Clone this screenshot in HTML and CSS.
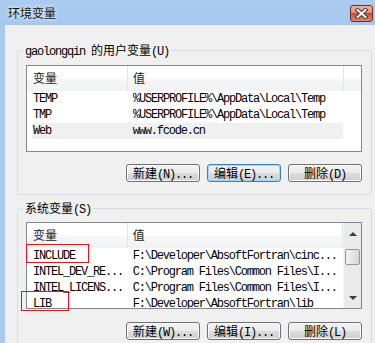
FILE: index.html
```html
<!DOCTYPE html>
<html lang="zh-CN">
<head>
    <meta charset="UTF-8">
    <meta name="viewport" content="width=device-width, initial-scale=1.0">
    <title>环境变量</title>
    <link rel="stylesheet" href="styles.css">
</head>
<body>

    <div class="window">
        <div class="titlebar">
            <span class="title">环境变量</span>
            <span class="close-btn">
                <svg width="13" height="11" viewBox="0 0 13 11">
                    <path d="M2.5 2 L10.5 9 M10.5 2 L2.5 9" stroke="#3a3a3a" stroke-width="4" stroke-linecap="square"/>
                    <path d="M2.5 2 L10.5 9 M10.5 2 L2.5 9" stroke="#fff" stroke-width="2" stroke-linecap="square"/>
                </svg>
            </span>
        </div>

        <div class="client">
            <div class="group">
                <div class="group-title">gaolongqin <span class="cn">的用户变量</span>(U)</div>
                <div class="listview">
                    <div class="lv-main">
                        <div class="lv-head">
                            <div class="col c1 cn">变量</div>
                            <div class="col c2 cn">值</div>
                            <div class="col filler"></div>
                        </div>
                        <div class="lv-row">
                            <div class="col c1">TEMP</div>
                            <div class="col c2">%USERPROFILE%\AppData\Local\Temp</div>
                        </div>
                        <div class="lv-row">
                            <div class="col c1">TMP</div>
                            <div class="col c2">%USERPROFILE%\AppData\Local\Temp</div>
                        </div>
                        <div class="lv-row hover">
                            <div class="col c1">Web</div>
                            <div class="col c2">www.fcode.cn</div>
                        </div>
                    </div>
                </div>
                <div class="buttons">
                    <button class="btn"><span class="cn">新建</span>(N)...</button>
                    <button class="btn focused"><span class="cn">编辑</span>(E)...</button>
                    <button class="btn"><span class="cn">删除</span>(D)</button>
                </div>
            </div>

            <div class="group second">
                <div class="group-title"><span class="cn">系统变量</span>(S)</div>
                <div class="listview">
                    <div class="lv-main">
                        <div class="lv-head">
                            <div class="col c1 cn">变量</div>
                            <div class="col c2 cn">值</div>
                        </div>
                        <div class="lv-row">
                            <div class="col c1">INCLUDE</div>
                            <div class="col c2">F:\Developer\AbsoftFortran\cinc...</div>
                        </div>
                        <div class="lv-row">
                            <div class="col c1">INTEL_DEV_RE...</div>
                            <div class="col c2">C:\Program Files\Common Files\I...</div>
                        </div>
                        <div class="lv-row">
                            <div class="col c1">INTEL_LICENS...</div>
                            <div class="col c2">C:\Program Files\Common Files\I...</div>
                        </div>
                        <div class="lv-row">
                            <div class="col c1">LIB</div>
                            <div class="col c2">F:\Developer\AbsoftFortran\lib</div>
                        </div>
                    </div>
                    <div class="vscroll">
                        <span class="arrow up"></span>
                        <span class="thumb"></span>
                        <span class="track"></span>
                        <span class="arrow down"></span>
                    </div>
                </div>
                <div class="buttons">
                    <button class="btn"><span class="cn">新建</span>(W)...</button>
                    <button class="btn"><span class="cn">编辑</span>(I)...</button>
                    <button class="btn"><span class="cn">删除</span>(L)</button>
                </div>
            </div>
        </div>

        <!-- red marks drawn over the screenshot -->
        <div class="mark mark-include"></div>
        <div class="mark mark-lib"></div>
    </div>

</body>
</html>
```

FILE: styles.css
```css
body {
    margin: 0;
    background-color: #a9c9ef;
    font-family: 'Liberation Mono', 'Noto Sans CJK SC', monospace;
    font-size: 12px;
    color: #000;
    overflow: hidden;
}

.cn {
    font-family: 'Noto Sans CJK SC', sans-serif;
    letter-spacing: 0;
}

.window {
    position: relative;
    width: 375px;
    height: 343px;
}

.titlebar {
    height: 25px;
    display: flex;
    justify-content: space-between;
    align-items: flex-start;
    background: linear-gradient(#abcbf1, #a7c7ee);
}

.title {
    font-family: 'Noto Sans CJK SC', sans-serif;
    font-size: 12px;
    line-height: 14px;
    margin: 6px 0 0 8px;
    color: #111;
    text-shadow: 0 0 5px #e6f0fb, 0 0 3px #e6f0fb;
}

.close-btn {
    width: 21px;
    height: 15px;
    margin: 5px 2px 0 0;
    border: 1px solid #7b2a1e;
    border-radius: 3px;
    background: linear-gradient(#eeb0a2 0%, #e38f7b 45%, #c8412a 50%, #d45b41 60%, #e48468 100%);
    display: flex;
    align-items: center;
    justify-content: center;
}

.client {
    margin-left: 5px;
    height: 318px;
    padding-top: 25px;
    box-sizing: border-box;
    background-color: #f0f0f0;
}

.group {
    width: 355px;
    margin-left: 12px;
    box-sizing: border-box;
    border: 1px solid #d5dfe5;
    border-radius: 3px;
    padding: 0 9px 12px 8px;
}

.group.second {
    margin-top: 13px;
    height: 200px;
}

.group-title {
    width: fit-content;
    margin: -8px 0 6px -3px;
    padding: 0 2px;
    line-height: 14px;
    letter-spacing: -1.2px;
    background-color: #f0f0f0;
}

.group.second .group-title {
    margin-bottom: 5px;
}

.listview {
    height: 87px;
    box-sizing: border-box;
    border: 1px solid #828790;
    background-color: #fff;
    display: flex;
    overflow: hidden;
}

.lv-main {
    flex: 1;
    overflow: hidden;
}

.lv-head {
    display: flex;
    height: 25px;
    background: linear-gradient(#ffffff 0%, #ffffff 45%, #f6f7f8 55%, #f1f2f4 100%);
}

.lv-head .col {
    line-height: 24px;
    color: #1a1a1a;
    border-right: 1px solid #e3e5e8;
}

.lv-head .filler {
    flex: 1;
    border-right: none;
}

.col {
    box-sizing: border-box;
    white-space: nowrap;
    overflow: hidden;
}

.c1 {
    width: 101px;
    padding-left: 6px;
}

.c2 {
    width: 216px;
    padding-left: 5px;
}

.lv-row {
    display: flex;
    height: 16px;
    line-height: 16px;
    letter-spacing: -1.2px;
}

.lv-row.hover {
    margin-left: 5px;
    width: 311px;
    background-color: #f0f0f0;
}

.lv-row.hover .c1 {
    width: 96px;
    padding-left: 1px;
}

.vscroll {
    width: 17px;
    display: flex;
    flex-direction: column;
    align-items: center;
    background-color: #eaeaea;
    border-left: 1px solid #f4f4f4;
}

.arrow {
    width: 0;
    height: 0;
    border-left: 4px solid transparent;
    border-right: 4px solid transparent;
}

.arrow.up {
    margin-top: 9px;
    border-bottom: 4px solid #3a3a3a;
}

.arrow.down {
    margin-bottom: 8px;
    border-top: 4px solid #3a3a3a;
}

.thumb {
    width: 15px;
    height: 16px;
    margin-top: 13px;
    box-sizing: border-box;
    border: 1px solid #979797;
    border-radius: 2px;
    background: linear-gradient(90deg, #f3f3f3, #e2e2e2 60%, #d6d6d6);
}

.track {
    flex: 1;
}

.buttons {
    display: flex;
    justify-content: flex-end;
    gap: 7px;
    margin-top: 12px;
}

.group.second .buttons {
    margin-top: 13px;
}

.btn {
    width: 74px;
    height: 18px;
    padding: 0;
    font-family: 'Liberation Mono', monospace;
    font-size: 12px;
    line-height: 16px;
    letter-spacing: -1.2px;
    color: #000;
    border: 1px solid #707070;
    border-radius: 3px;
    background: linear-gradient(#f2f2f2 0%, #ebebeb 50%, #dddddd 51%, #cfcfcf 100%);
    box-shadow: inset 0 0 0 1px #fcfcfc;
}

.btn.focused {
    border-color: #3c7fb1;
    box-shadow: inset 0 0 0 1px #9fdbf9;
}

.mark {
    position: absolute;
    box-sizing: border-box;
    border: 1px solid #e3161b;
}

.mark-include {
    left: 26px;
    top: 244px;
    width: 63px;
    height: 19px;
}

.mark-lib {
    left: 21px;
    top: 291px;
    width: 48px;
    height: 20px;
}
```
